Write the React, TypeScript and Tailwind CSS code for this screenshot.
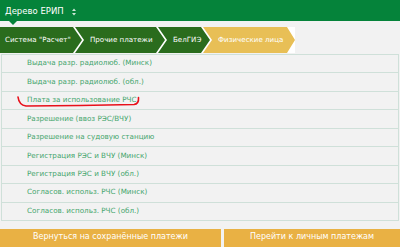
import React from "react";

const rows = [
  "Выдача разр. радиолюб. (Минск)",
  "Выдача разр. радиолюб. (обл.)",
  "Плата за использование РЧС",
  "Разрешение (ввоз РЭС/ВЧУ)",
  "Разрешение на судовую станцию",
  "Регистрация РЭС и ВЧУ (Минск)",
  "Регистрация РЭС и ВЧУ (обл.)",
  "Согласов. использ. РЧС (Минск)",
  "Согласов. использ. РЧС (обл.)",
];

const crumbs = [
  { label: "Система \"Расчет\"", width: "w-[82px]", first: true },
  { label: "Прочие платежи", width: "w-[90px]" },
  { label: "БелГИЭ", width: "w-[52px]" },
];

export default function App() {
  return (
    <div className="relative h-[247px] w-[400px] overflow-hidden bg-[#f2f2f2] font-['DejaVu_Sans',sans-serif]">
      {/* Header */}
      <div className="relative flex h-[21px] items-center bg-[#05833a] pl-[5px] pt-[2px] text-[8.5px] text-white">
        <span>Дерево ЕРИП</span>
        <svg width="6" height="8" viewBox="0 0 6 8" className="ml-[7px] opacity-80">
          <path d="M3 0.5 L5 3 L1 3 Z M3 7.5 L5 5 L1 5 Z" fill="#ffffff" />
        </svg>
        <div className="absolute left-[9px] top-[21px] h-0 w-0 border-x-[4px] border-t-[4px] border-x-transparent border-t-[#05833a]" />
      </div>

      {/* Breadcrumb */}
      <div className="mt-[6px] inline-flex h-[26px] bg-white align-top">
        {crumbs.map((c) => (
          <div
            key={c.label}
            className={`flex items-center bg-[#2a6c1d] text-[7.1px] text-white ${c.width} ${
              c.first
                ? "pl-[5px] [clip-path:polygon(0_0,calc(100%-9px)_0,100%_50%,calc(100%-9px)_100%,0_100%)]"
                : "-ml-[7px] pl-[15px] [clip-path:polygon(0_0,calc(100%-9px)_0,100%_50%,calc(100%-9px)_100%,0_100%,9px_50%)]"
            }`}
          >
            {c.label}
          </div>
        ))}
        <div className="-ml-[7px] flex w-[92px] items-center bg-[#e8bf56] pl-[15px] text-[7.1px] text-white [clip-path:polygon(0_0,calc(100%-8px)_0,100%_50%,calc(100%-8px)_100%,0_100%,9px_50%)]">
          Физические лица
        </div>
      </div>

      {/* List */}
      <div className="mx-[1px] mt-px border-x border-b border-[#cfe0d9]">
        {rows.map((r) => (
          <div
            key={r}
            className="flex h-[18.45px] items-center border-t border-[#cfe0d9] pl-[25px] text-[7.2px] text-[#44a56c]"
          >
            {r}
          </div>
        ))}
      </div>

      {/* Red underline */}
      <svg className="pointer-events-none absolute left-0 top-0" width="400" height="247">
        <path
          d="M18 97 Q19 105 26 106 L80 105.5 L134 104.5 Q139 104 138.5 97.5"
          fill="none"
          stroke="#e8101a"
          strokeWidth="1.6"
          strokeLinecap="round"
        />
      </svg>

      {/* Buttons */}
      <div className="mt-[8px] flex gap-[3px]">
        <button className="flex h-[22px] w-[221px] items-start justify-center border-b-[4px] border-[#e2a11c] bg-[#e9b144] pt-[2px] text-[8px] text-white">
          Вернуться на сохранённые платежи
        </button>
        <button className="flex h-[22px] flex-1 items-start justify-center border-b-[4px] border-[#e2a11c] bg-[#e9b144] pt-[2px] text-[8px] text-white">
          Перейти к личным платежам
        </button>
      </div>
    </div>
  );
}
